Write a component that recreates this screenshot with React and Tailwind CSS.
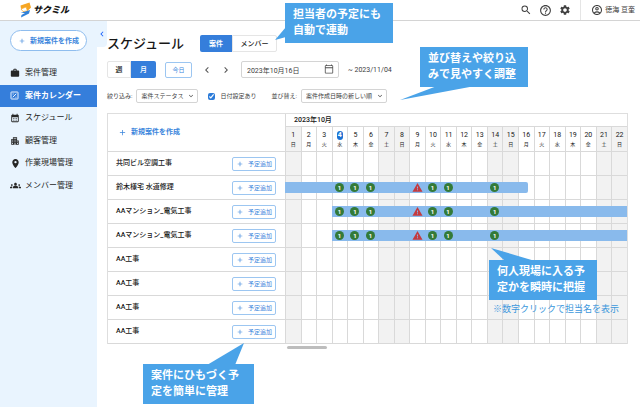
import {
  MdAdd,
  MdApartment,
  MdCalendarMonth,
  MdChevronLeft,
  MdChevronRight,
  MdExpandMore,
  MdGroups,
  MdHelpOutline,
  MdOutlineAccountCircle,
  MdOutlineCalendarToday,
  MdPlace,
  MdSearch,
  MdSettings,
  MdWarning,
  MdWork
} from 'react-icons/md';

const weekdays = ['日', '月', '火', '水', '木', '金', '土'];

const days = Array.from({ length: 22 }, (_, i) => ({
  date: i + 1,
  weekday: weekdays[i % 7],
  isWeekend: i % 7 === 0 || i % 7 === 6
}));

const marks = { 4: 'ok', 5: 'ok', 6: 'ok', 9: 'warn', 10: 'ok', 11: 'ok', 14: 'ok' };

const projects = [
  { id: 1, name: '共同ビル空調工事' },
  { id: 2, name: '鈴木様宅 水道修理', from: 1, to: 16, ends: true },
  { id: 3, name: 'AAマンション_電気工事', from: 4, to: 22 },
  { id: 4, name: 'AAマンション_電気工事', from: 4, to: 22 },
  { id: 5, name: 'AA工事' },
  { id: 6, name: 'AA工事' },
  { id: 7, name: 'AA工事' },
  { id: 8, name: 'AA工事' }
];

function BoardIcon() {
  return (
    <svg width="9" height="9" viewBox="0 0 18 18" fill="none" stroke="currentColor" strokeWidth="1.8">
      <rect x="2" y="2" width="14" height="14" rx="1" />
      <path d="M5.5 12.5 L12.5 5.5" />
      <path d="M5 6 H8 M10.5 12.5 H13" strokeWidth="1.2" />
    </svg>
  );
}

const menu = [
  { label: '案件管理', icon: <MdWork size={10} /> },
  { label: '案件カレンダー', icon: <BoardIcon />, active: true },
  { label: 'スケジュール', icon: <MdCalendarMonth size={10} /> },
  { label: '顧客管理', icon: <MdApartment size={10} /> },
  { label: '作業現場管理', icon: <MdPlace size={11} /> },
  { label: 'メンバー管理', icon: <MdGroups size={11} /> }
];

function Logo() {
  return (
    <a href="#" className="flex items-center gap-px text-neutral-900">
      <svg width="13" height="16" viewBox="0 0 26 32">
        <path d="M3 7 L21 1 L24 11 L17 18 L14 10 L4 14 Z" fill="#f6a623" />
        <path d="M4 14 L14 10 L17 18 L8 19 Z" fill="#fff" stroke="#f6a623" strokeWidth="1.5" />
        <path d="M3 22 L22 16 L20 23 L4 31 L5 26 L12 22 Z" fill="#2f80d8" />
      </svg>
      <span className="text-[9px] leading-4 font-black italic">サクミル</span>
    </a>
  );
}

function Header() {
  return (
    <header className="flex h-[21px] items-center justify-between border-b border-neutral-300 bg-white pr-[5px] pl-[19px]">
      <Logo />
      <div className="flex items-center text-neutral-700">
        <button aria-label="検索" className="mr-[7px]"><MdSearch size={12} /></button>
        <button aria-label="ヘルプ" className="mr-[7px]"><MdHelpOutline size={13} /></button>
        <button aria-label="設定"><MdSettings size={12} /></button>
        <button className="ml-[9px] flex h-5 items-center gap-0.5 border-l border-neutral-200 pl-2.5">
          <MdOutlineAccountCircle size={12} />
          <span className="text-[7px] leading-3">徳海 亘奎</span>
        </button>
      </div>
    </header>
  );
}

function Sidebar() {
  return (
    <aside className="relative w-[97px] shrink-0 bg-[#e9f4fe]">
      <button
        aria-label="メニューを閉じる"
        className="absolute top-0 left-full flex h-[26px] w-[10px] items-center justify-center rounded-br-sm bg-[#e9f4fe] text-blue-600"
      >
        <MdChevronLeft size={10} />
      </button>
      <div className="px-2.5 pt-[9px]">
        <button className="flex h-[21px] w-full items-center justify-center gap-1 rounded-full border border-[#8fbdee] bg-white text-[7px] leading-3 font-bold text-[#3a85dc]">
          <MdAdd size={8} />
          新規案件を作成
        </button>
      </div>
      <nav className="mt-[11px] grid h-[135px] grid-rows-6">
        {menu.map((item) => (
          <a
            key={item.label}
            href="#"
            className={`flex items-center pl-2.5 text-[8px] leading-3 ${
              item.active ? 'bg-[#357edb] font-bold text-white' : 'text-neutral-800'
            }`}
          >
            <span className="flex w-[15px] items-center">{item.icon}</span>
            {item.label}
          </a>
        ))}
      </nav>
    </aside>
  );
}

function Select({ id, label, value, className }) {
  return (
    <div className="flex items-center gap-1">
      <label htmlFor={id}>{label}</label>
      <div className={`relative ${className}`}>
        <select
          id={id}
          className="block h-[14px] w-full appearance-none rounded-xs border border-neutral-300 bg-white pl-1 text-[6px] leading-3 text-neutral-700"
        >
          <option>{value}</option>
        </select>
        <MdExpandMore size={8} className="pointer-events-none absolute top-[3px] right-[3px]" />
      </div>
    </div>
  );
}

function Toolbar() {
  return (
    <>
      <div className="flex h-[17px] items-center">
        <h1 className="w-[93px] text-[13px] leading-4 font-medium text-neutral-900">スケジュール</h1>
        <div className="flex h-[17px] text-[7px] leading-3">
          <button className="w-8 rounded-l-xs bg-[#357edb] font-bold text-white">案件</button>
          <button className="w-[45px] rounded-r-xs border border-neutral-200 font-medium">メンバー</button>
        </div>
      </div>

      <div className="mt-[9px] flex h-[17px] items-center text-[7px] leading-3">
        <div className="flex h-[17px] font-medium">
          <button className="w-6 rounded-l-xs border border-neutral-200">週</button>
          <button className="w-[25px] rounded-r-xs bg-[#357edb] text-white">月</button>
        </div>
        <button className="ml-[9px] h-4 w-[27px] rounded-xs border border-[#9cc6f1] text-[6px] text-[#3a85dc]">今日</button>
        <button aria-label="前へ" className="ml-[9px] text-neutral-600"><MdChevronLeft size={12} /></button>
        <button aria-label="次へ" className="ml-[7px] text-neutral-600"><MdChevronRight size={12} /></button>
        <div className="relative ml-[9px] w-[98px]">
          <input
            aria-label="開始日"
            defaultValue="2023年10月16日"
            className="block h-[17px] w-full rounded-xs border border-neutral-300 pl-[5px] text-[7px] leading-3 text-neutral-700"
          />
          <MdOutlineCalendarToday size={10} className="absolute top-[3px] right-[5px] text-neutral-600" />
        </div>
        <span className="ml-[9px] text-neutral-700">~ 2023/11/04</span>
      </div>

      <div className="mt-[11px] flex h-[14px] items-center text-[6px] leading-3 text-neutral-700">
        <Select id="status" label="絞り込み:" value="案件ステータス" className="w-[62px]" />
        <label className="ml-2.5 flex items-center gap-[5px]">
          <input type="checkbox" defaultChecked className="h-[7px] w-[7px] accent-[#2b7bd9]" />
          日付設定あり
        </label>
        <div className="ml-[15px]">
          <Select id="sort" label="並び替え:" value="案件作成日時の新しい順" className="w-[86px]" />
        </div>
      </div>
    </>
  );
}

function Mark({ type }) {
  if (type === 'warn') {
    return <MdWarning size={11} className="text-[#c43a3f]" />;
  }
  return (
    <span className="flex h-[9px] w-[9px] items-center justify-center rounded-full bg-[#337a38] text-[6px] leading-none font-bold text-white">
      1
    </span>
  );
}

function DayCell({ day, project }) {
  const hasBar = day.date >= project.from && day.date <= project.to;
  const isEnd = project.ends && day.date === project.to;

  return (
    <td className={`border-b border-l border-[#d9d9d9] p-0 ${day.isWeekend ? 'bg-[#f2f2f2]' : ''}`}>
      {hasBar && (
        <div
          className={`-ml-px flex h-[11px] items-center justify-center bg-[#89baec] ${
            isEnd ? 'w-2/3 rounded-r-xs' : ''
          }`}
        >
          {marks[day.date] && <Mark type={marks[day.date]} />}
        </div>
      )}
    </td>
  );
}

function Schedule() {
  return (
    <table className="mt-2.5 w-full table-fixed border-separate border-spacing-0 border-t border-r border-l border-[#dedede] text-[7px] leading-[9px] text-neutral-900">
      <colgroup>
        <col className="w-[177px]" />
        {days.map((day) => <col key={day.date} />)}
      </colgroup>
      <thead>
        <tr className="h-[13px]">
          <th rowSpan={2} className="border-b border-[#d9d9d9] p-0 pl-2.5 text-left">
            <button className="flex items-center gap-1 font-bold text-[#3a85dc]">
              <MdAdd size={9} />
              新規案件を作成
            </button>
          </th>
          <th colSpan={22} className="border-b border-l border-[#d9d9d9] p-0 pl-2 text-left font-medium">
            2023年10月
          </th>
        </tr>
        <tr className="h-[25px]">
          {days.map((day) => (
            <th
              key={day.date}
              className={`border-b border-l border-[#d9d9d9] p-0 font-normal ${day.isWeekend ? 'bg-[#f2f2f2]' : ''}`}
            >
              <div className="flex flex-col items-center">
                <span className={day.date === 4 ? 'rounded-full bg-[#1b72d4] px-px font-bold text-white' : ''}>
                  {day.date}
                </span>
                <span className="text-[5px] leading-[8px]">{day.weekday}</span>
              </div>
            </th>
          ))}
        </tr>
      </thead>
      <tbody>
        {projects.map((project) => (
          <tr key={project.id} className="h-6">
            <th className="border-b border-[#d9d9d9] p-0 pr-[9px] pl-2 text-left font-medium">
              <div className="flex items-center justify-between">
                {project.name}
                <button className="flex h-[14px] w-[44px] items-center justify-center gap-1 rounded-xs border border-[#9cc6f1] text-[6px] font-normal text-[#3a85dc]">
                  <MdAdd size={8} />
                  予定追加
                </button>
              </div>
            </th>
            {days.map((day) => <DayCell key={day.date} day={day} project={project} />)}
          </tr>
        ))}
      </tbody>
    </table>
  );
}

function Callout({ lines, className, tailClass, tail }) {
  return (
    <div className={`absolute bg-[#4aa3e8] px-2 py-1 text-[11px] leading-4 font-bold whitespace-nowrap text-white ${className}`}>
      <svg className={`absolute overflow-visible ${tailClass}`} width="1" height="1" fill="#4aa3e8">
        <polygon points={tail} />
      </svg>
      {lines.map((line) => <p key={line}>{line}</p>)}
    </div>
  );
}

function App() {
  return (
    <div
      lang="ja"
      className="relative flex min-h-screen flex-col overflow-hidden bg-white font-[Roboto,'Noto_Sans_CJK_JP',sans-serif] text-neutral-900"
    >
      <Header />
      <div className="flex flex-1">
        <Sidebar />
        <main className="min-w-0 flex-1 pt-[14px] pr-3 pl-2.5">
          <Toolbar />
          <Schedule />
          <div className="mt-0.5 ml-[180px] h-[3px] w-10 rounded-full bg-neutral-400/70" />
        </main>
      </div>

      <Callout
        lines={['担当者の予定にも', '自動で連動']}
        className="top-[3px] left-[285px] w-[108px]"
        tailClass="top-0 left-0"
        tail="1,24 -10,37 1,34"
      />
      <Callout
        lines={['並び替えや絞り込', 'みで見やすく調整']}
        className="top-[47px] left-[420px] w-[108px]"
        tailClass="top-full left-0"
        tail="17,-1 -20,13 55,-1"
      />
      <Callout
        lines={['何人現場に入る予', '定かを瞬時に把握']}
        className="top-[260px] left-[489px] w-[108px]"
        tailClass="top-0 left-0"
        tail="16,1 2,-12 46,1"
      />
      <p className="absolute top-[303px] left-[493px] text-[9px] leading-3 whitespace-nowrap text-[#3b97dc]">
        ※数字クリックで担当名を表示
      </p>
      <Callout
        lines={['案件にひもづく予', '定を簡単に管理']}
        className="top-[364px] left-[143px] w-[111px]"
        tailClass="top-0 left-0"
        tail="64,1 101,-21 92,1"
      />
    </div>
  );
}

export default App;
